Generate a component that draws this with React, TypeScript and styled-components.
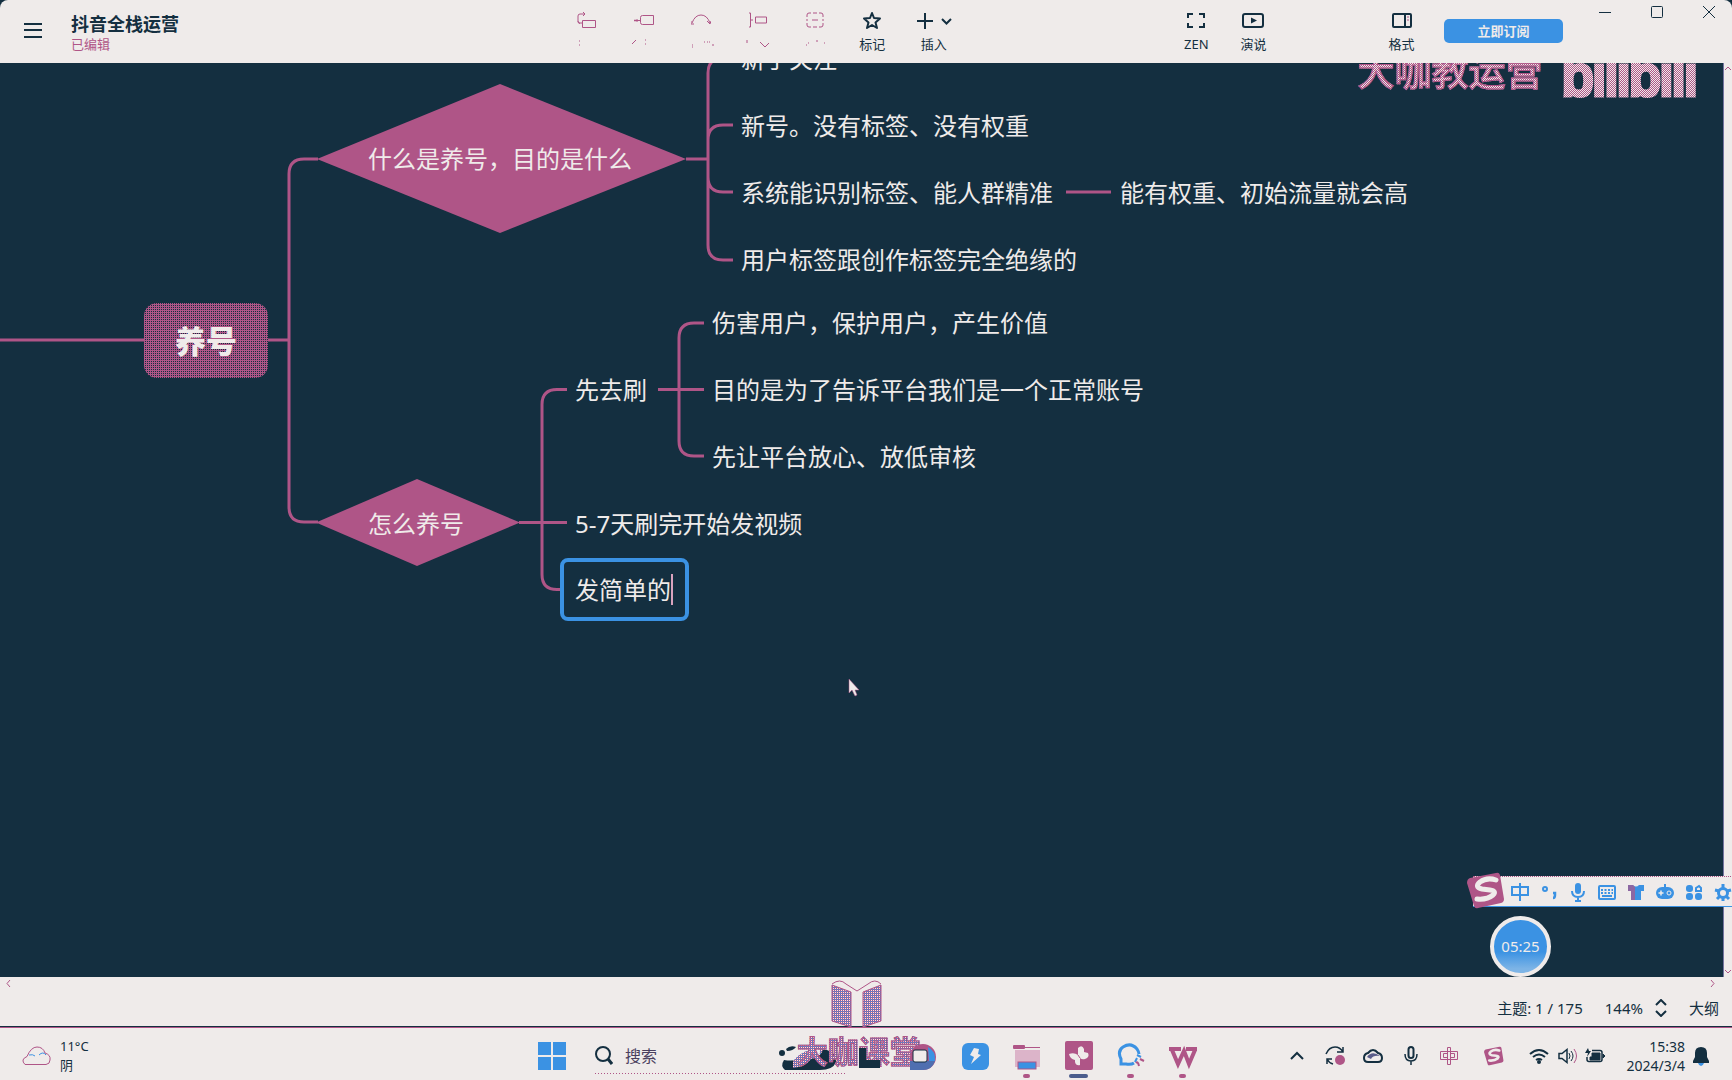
import React from "react";
import styled, { createGlobalStyle } from "styled-components";

const navy = "#142f40";
const pink = "#af5587";
const paper = "#efebea";
const blue = "#3b92e3";

const Global = createGlobalStyle`
  *, *::before, *::after { box-sizing: border-box; }
  body {
    margin: 0;
    background: ${navy};
    color: ${navy};
    font-family: "Noto Sans", "Noto Sans CJK SC", sans-serif;
  }
  button, input {
    font: inherit;
    color: inherit;
    margin: 0;
    padding: 0;
    border: 0;
    background: none;
  }
  svg { display: block; }
`;

const Page = styled.div`
  display: flex;
  flex-direction: column;
  min-height: 100vh;
`;

/* ---------- title bar ---------- */

const Header = styled.header`
  display: flex;
  height: 63px;
  background: ${paper};
  border-radius: 8px 8px 0 0;
`;

const DocInfo = styled.div`
  flex: 534 1 0;
  display: flex;
  align-items: flex-start;
  gap: 29px;
  padding: 12px 0 0 24px;
`;

const MenuButton = styled.button`
  height: 38px;
  display: flex;
  align-items: center;
`;

const DocTitle = styled.h1`
  margin: 0;
  font-size: 18px;
  line-height: 24px;
  font-weight: 700;
`;

const DocState = styled.p`
  margin: 0;
  font-size: 13px;
  line-height: 16px;
  color: ${pink};
`;

const ToolGroup = styled.div`
  display: flex;
`;

const Spacer = styled.div<{ $share: number }>`
  flex: ${(p) => p.$share} 1 0;
`;

const ToolButton = styled.button<{ $wide?: boolean }>`
  width: ${(p) => (p.$wide ? 66 : 57)}px;
  height: 63px;
  padding-top: 10px;
  display: flex;
  flex-direction: column;
  align-items: center;
  gap: 5px;
  font-size: 13px;
  line-height: 18px;
`;

const SubscribeButton = styled.button`
  width: 119px;
  height: 24px;
  margin: 19px 19px 0 14px;
  border-radius: 5px;
  background: ${blue};
  color: ${paper};
  font-size: 13px;
  line-height: 24px;
  font-weight: 700;
`;

const WindowControls = styled.div`
  display: flex;
  gap: 6px;
`;

const WindowButton = styled.button`
  width: 46px;
  height: 24px;
  display: flex;
  align-items: center;
  justify-content: center;
`;

/* ---------- mind map ---------- */

const Workspace = styled.main`
  position: relative;
  flex: 1;
  display: grid;
  grid-template-columns: 1fr 9px;
  min-height: 600px;
  overflow: hidden;
`;

const Canvas = styled.section`
  position: relative;
  overflow: hidden;
  background: ${navy};
  color: ${paper};
`;

const Links = styled.svg`
  position: absolute;
  left: 0;
  top: 0;
`;

const Topic = styled.div<{ $x: number; $y: number }>`
  position: absolute;
  left: ${(p) => p.$x}px;
  top: ${(p) => p.$y - 16}px;
  font-size: 24px;
  line-height: 32px;
  white-space: nowrap;
`;

const RootTopic = styled.div`
  position: absolute;
  left: 144px;
  top: 240px;
  width: 124px;
  height: 75px;
  border-radius: 13px;
  background: conic-gradient(${navy} 25%, ${pink} 0) 0 0 / 2px 2px;
  font-size: 31px;
  line-height: 77px;
  font-weight: 900;
  text-align: center;
`;

const EditingTopic = styled.label`
  position: absolute;
  left: 560px;
  top: 495px;
  width: 129px;
  height: 63px;
  display: flex;
  align-items: center;
  padding-left: 11px;
  border: 4px solid ${blue};
  border-radius: 8px;
  background: ${navy};
`;

const TopicInput = styled.input`
  width: 96px;
  font-size: 24px;
  line-height: 32px;
  outline: none;
`;

const Caret = styled.span`
  width: 2px;
  height: 31px;
  background: #d9a3be;
`;

const Pointer = styled.svg`
  position: absolute;
  left: 848px;
  top: 616px;
`;

const Watermark = styled.div`
  position: absolute;
  right: 26px;
  top: -20px;
  display: flex;
  align-items: flex-start;
  gap: 20px;
`;

const speckle = `
  color: transparent;
  background: conic-gradient(${pink} 25%, ${paper} 0 50%, ${pink} 0 75%, ${paper} 0) 0 0 / 2px 2px;
  background-clip: text;
  -webkit-background-clip: text;
  -webkit-text-stroke: 1px ${pink};
`;

const WatermarkName = styled.span`
  ${speckle}
  padding-top: 4px;
  font-size: 37px;
  line-height: 50px;
  font-weight: 500;
`;

const WatermarkBrand = styled.span`
  ${speckle}
  -webkit-text-stroke: 5px transparent;
  padding-bottom: 8px;
  font-family: "Liberation Sans", Arial, sans-serif;
  font-size: 55px;
  line-height: 66px;
`;

const ScrollTrack = styled.div`
  display: flex;
  flex-direction: column;
  justify-content: space-between;
  align-items: center;
  padding: 2px 0;
  background: ${paper};
  border-left: 1px solid #75749f;
`;

const ImeBar = styled.div`
  position: absolute;
  right: -5px;
  bottom: 70px;
  height: 31px;
  display: flex;
  align-items: center;
  padding-left: 32px;
  background: ${paper};
  border-top: 1px dotted ${pink};
  border-bottom: 1px solid ${blue};
`;

const ImeLogo = styled.svg`
  position: absolute;
  left: -6px;
  top: -5px;
`;

const ImeButton = styled.button`
  width: 29px;
  height: 29px;
  display: flex;
  align-items: center;
  justify-content: center;
`;

const TimerBadge = styled.div`
  position: absolute;
  right: 181px;
  bottom: 0;
  width: 61px;
  height: 61px;
  border: 4px solid ${paper};
  border-radius: 50%;
  background: linear-gradient(${blue} 60%, #7db4e6 92%);
  color: ${paper};
  font-size: 15px;
  line-height: 53px;
  text-align: center;
`;

/* ---------- status bar ---------- */

const StatusBar = styled.footer`
  position: relative;
  height: 51px;
  display: flex;
  flex-direction: column;
  background: ${paper};
  border-bottom: 1px solid ${pink};
  box-shadow: inset 0 -1px 0 ${navy};
`;

const HorizontalTrack = styled.div`
  height: 12px;
  display: flex;
  justify-content: space-between;
  align-items: center;
  padding: 0 17px 0 6px;
`;

const StatusRow = styled.div`
  display: flex;
  justify-content: flex-end;
  align-items: center;
  gap: 22px;
  height: 38px;
  padding-right: 13px;
  font-size: 15px;
  line-height: 20px;
`;

const ZoomControl = styled.button`
  display: flex;
  align-items: center;
  gap: 12px;
`;

const BookMark = styled.svg`
  position: absolute;
  left: 48%;
  top: 3px;
`;

/* ---------- taskbar ---------- */

const Taskbar = styled.nav`
  position: relative;
  height: 52px;
  display: flex;
  align-items: center;
  padding-top: 3px;
  background: ${paper};
`;

const Weather = styled.div`
  flex: 515 1 0;
  display: flex;
  align-items: center;
  gap: 9px;
  padding-left: 22px;
  font-size: 13px;
  line-height: 19px;
`;

const SearchBox = styled.label`
  width: 250px;
  height: 36px;
  margin: 5px 0 0 29px;
  display: flex;
  align-items: center;
  gap: 12px;
  padding-bottom: 4px;
  background: linear-gradient(90deg, ${pink} 50%, transparent 0) 0 33px / 3px 1px repeat-x;
`;

const SearchInput = styled.input`
  width: 142px;
  font-size: 16px;
  line-height: 24px;
  outline: none;
  &::placeholder { color: #4a3f5e; opacity: 1; }
`;

const TaskButton = styled.button<{ $mark?: number }>`
  position: relative;
  width: 52px;
  height: 49px;
  display: flex;
  align-items: center;
  justify-content: center;
  &::after {
    content: "";
    position: absolute;
    bottom: 2px;
    width: ${(p) => p.$mark ?? 0}px;
    height: 4px;
    border-radius: 2px;
    background: ${(p) => ((p.$mark ?? 0) > 10 ? "#4b5c8c" : pink)};
  }
`;

const StartButton = styled.button`
  width: 28px;
`;

const TrayButton = styled.button<{ $w: number }>`
  width: ${(p) => p.$w}px;
  height: 40px;
  display: flex;
  align-items: center;
  justify-content: center;
`;

const Clock = styled.time`
  width: 73px;
  margin-right: 7px;
  font-size: 14px;
  line-height: 19px;
  text-align: right;
`;

const BellButton = styled.button`
  margin-right: 22px;
`;

const CourseMark = styled.div`
  ${speckle}
  position: absolute;
  left: 46%;
  top: 1px;
  font-size: 31px;
  line-height: 44px;
  font-weight: 700;
  background-image: conic-gradient(${pink} 25%, ${blue} 0 50%, ${pink} 0 75%, ${paper} 0);
  pointer-events: none;
`;

/* ---------- drawings ---------- */

type IconProps = { w: number; h: number; color?: string; sw?: number; children: React.ReactNode };
const Icon = ({ w, h, color = navy, sw = 2, children }: IconProps) => (
  <svg width={w} height={h} viewBox={`0 0 ${w} ${h}`} fill="none" stroke={color} strokeWidth={sw} aria-hidden="true">
    {children}
  </svg>
);

const Specks = ({ d }: { d: string }) => (
  <Icon w={26} h={18} color={pink} sw={1}>
    <path d={d} />
  </Icon>
);

const mutedTools = [
  {
    name: "主题",
    icon: <path d="M3 13.500q-2 0-2-2V6q0-2 2-2h5M1 11q0 2 2 2h2M6 2l2 2-2 2M5.500 10.500h13v7h-13z" />,
    specks: "M5 6h1M5 10h1",
  },
  {
    name: "子主题",
    icon: <path d="M0 10.500h7M3 9v3M1 9.500v2M6.500 7.500q0-2 2-2h11v9h-11q-2 0-2-2z" />,
    specks: "M1 9l4-4M14 5h1M14 9h1",
  },
  {
    name: "联系",
    icon: <path d="M1 13Q4 5 10 5t9 8M0 11v3h3M16 11l3 3 1-3" />,
    specks: "M4 10h1M4 12h1M16 7h1M19 7h1M21 7h1M24 10h2",
  },
  {
    name: "概要",
    icon: <path d="M1 3h1.500v14H1M3 10h2M7.500 7h11v6h-11z" />,
    specks: "M2 5v3M15 7l5 5 4-4",
  },
  {
    name: "外框",
    icon: (
      <>
        <path d="M2 7V5q0-2 2-2h2M14 3h2q2 0 2 2v2M18 13v2q0 2-2 2h-2M6 17H4q-2 0-2-2v-2M8 3h4M8 17h4M2 9v2M18 9v2" />
        <path d="M7 10h6" />
      </>
    ),
    specks: "M4 10h1M6 8h1M15 5v2M22 8h1",
  },
];

const SogouLogo = ({ bg, fg }: { bg: string; fg: string }) => (
  <>
    <path d="M3 6 29 1q3-1 4 2l4 24q0 3-3 4L11 36q-3 1-4-2L0 11Q0 7 3 6z" fill={bg} />
    <path
      d="M29 8q-9-3-16 2-6 5 2 7l8 1q7 1 3 5-6 5-16 4"
      fill="none"
      stroke={fg}
      strokeWidth="5"
      strokeLinecap="round"
    />
  </>
);

const topics: { x: number; y: number; text: string }[] = [
  { x: 368, y: 96, text: "什么是养号，目的是什么" },
  { x: 741, y: -4, text: "新手关注" },
  { x: 741, y: 63, text: "新号。没有标签、没有权重" },
  { x: 741, y: 130, text: "系统能识别标签、能人群精准" },
  { x: 1120, y: 130, text: "能有权重、初始流量就会高" },
  { x: 741, y: 197, text: "用户标签跟创作标签完全绝缘的" },
  { x: 368, y: 461, text: "怎么养号" },
  { x: 575, y: 327, text: "先去刷" },
  { x: 712, y: 260, text: "伤害用户，保护用户，产生价值" },
  { x: 712, y: 327, text: "目的是为了告诉平台我们是一个正常账号" },
  { x: 712, y: 394, text: "先让平台放心、放低审核" },
  { x: 575, y: 461, text: "5-7天刷完开始发视频" },
];

const imeTools = [
  { name: "中文", icon: <Icon w={20} h={20} color={blue} sw={2}><path d="M2 5h16v8H2zM10 1v18" /></Icon> },
  {
    name: "标点",
    icon: (
      <Icon w={20} h={20} color={blue}>
        <circle cx="6" cy="7" r="2" />
        <path d="M14 11h2v2q0 3-2 3" strokeWidth="2.500" />
      </Icon>
    ),
  },
  {
    name: "语音",
    icon: (
      <Icon w={20} h={20} color={blue}>
        <rect x="7" y="1" width="6" height="11" rx="3" fill={blue} stroke="none" />
        <path d="M4 9q0 6 6 6t6-6M10 15v4M7 19h6" />
      </Icon>
    ),
  },
  {
    name: "键盘",
    icon: (
      <Icon w={20} h={20} color={blue}>
        <rect x="2" y="4" width="16" height="13" rx="1" />
        <path d="M4 8h12M4 11h12" strokeDasharray="2 1.500" />
        <path d="M5 14h10" />
      </Icon>
    ),
  },
  {
    name: "皮肤",
    icon: (
      <Icon w={20} h={20} color={blue} sw={0}>
        <path d="M2 3h5q3 3 6 0h5v6h-3v9H5V9H2z" fill={blue} />
        <path d="M2 3h5l2 2v13H5V9H2z" fill={pink} opacity=".7" />
      </Icon>
    ),
  },
  {
    name: "游戏",
    icon: (
      <Icon w={20} h={20} color={paper} sw={1}>
        <rect x="1" y="5" width="18" height="12" rx="6" fill={blue} stroke="none" />
        <path d="M10 2v4" stroke={blue} strokeWidth="2" />
        <path d="M3.500 11h5M6 8.500v5" strokeWidth="1.500" />
        <circle cx="14" cy="11" r="2" fill={blue} />
      </Icon>
    ),
  },
  {
    name: "工具",
    icon: (
      <Icon w={20} h={20} color={blue} sw={0}>
        <g fill={blue}>
          <rect x="2" y="3" width="7" height="7" rx="3" />
          <rect x="2" y="11" width="7" height="7" rx="3" />
          <rect x="11" y="11" width="7" height="7" rx="3" />
        </g>
        <path d="M12 9V6l3-2 2 2v3z" stroke={blue} strokeWidth="2" />
      </Icon>
    ),
  },
  {
    name: "设置",
    icon: (
      <Icon w={20} h={20} color={blue} sw={3}>
        <circle cx="10" cy="11" r="4.500" />
        <path d="M10 2v4M10 16v3M2 8l4 1M14 9l4-1M4 17l3-3M13 14l3 3" />
      </Icon>
    ),
  },
];

export default function App() {
  return (
    <Page>
      <Global />
      <Header>
        <DocInfo>
          <MenuButton aria-label="菜单">
            <Icon w={18} h={18}>
              <path d="M0 2h18M0 8h18M0 15h18" />
            </Icon>
          </MenuButton>
          <div>
            <DocTitle>抖音全栈运营</DocTitle>
            <DocState>已编辑</DocState>
          </div>
        </DocInfo>
        <ToolGroup>
          {mutedTools.map((t) => (
            <ToolButton key={t.name} aria-label={t.name}>
              <Icon w={20} h={20} color={pink} sw={1}>{t.icon}</Icon>
              <Specks d={t.specks} />
            </ToolButton>
          ))}
          <ToolButton>
            <Icon w={20} h={20}>
              <path d="m10 3 2 5 6 .5-4.500 4L15 18l-5-3-5 3 1.500-5.500L2 8.500 8 8z" strokeLinejoin="round" />
            </Icon>
            标记
          </ToolButton>
          <ToolButton $wide>
            <Icon w={36} h={20}>
              <path d="M1 11h16M9 3v16M26 9l4.500 4.500L35 9" />
            </Icon>
            插入
          </ToolButton>
        </ToolGroup>
        <Spacer $share={201} />
        <ToolGroup>
          <ToolButton>
            <Icon w={20} h={20}>
              <path d="M2 8V4h5M13 4h5v4M18 13v4h-5M7 17H2v-4" />
            </Icon>
            ZEN
          </ToolButton>
          <ToolButton>
            <Icon w={22} h={20}>
              <rect x="1" y="4" width="20" height="13" rx="2" />
              <path d="M9 7.500v6l6-3z" fill={navy} stroke="none" />
            </Icon>
            演说
          </ToolButton>
        </ToolGroup>
        <Spacer $share={91} />
        <ToolButton>
          <Icon w={20} h={20}>
            <rect x="1" y="4" width="18" height="13" rx="1" />
            <path d="M13 4v13" />
            <path d="M15 7h2M15 10h2" strokeWidth="1" stroke={pink} />
          </Icon>
          格式
        </ToolButton>
        <SubscribeButton>立即订阅</SubscribeButton>
        <WindowControls>
          <WindowButton aria-label="最小化">
            <Icon w={12} h={12} sw={1}><path d="M0 6.500h12" /></Icon>
          </WindowButton>
          <WindowButton aria-label="最大化">
            <Icon w={12} h={12} sw={1}><rect x=".5" y=".5" width="11" height="11" rx="1" /></Icon>
          </WindowButton>
          <WindowButton aria-label="关闭">
            <Icon w={12} h={12} sw={1}><path d="M0 0l12 12M12 0L0 12" /></Icon>
          </WindowButton>
        </WindowControls>
      </Header>

      <Workspace>
        <Canvas>
          <Links width="1720" height="914" fill="none" stroke={pink} strokeWidth="3" aria-hidden="true">
            <path d="M0 277h144M268 277h21M318 96h-14q-15 0-15 15v333q0 15 15 15h14" />
            <path d="M317 96 500 21 686 96 500 170z" fill={pink} stroke="none" />
            <path d="M316 459.500 417 416l103 43.500L417 503z" fill={pink} stroke="none" />
            <path d="M686 96h22M733-5h-10q-15 0-15 15v172q0 15 15 15h10M733 62h-10q-15 0-15 15M708 114q0 15 15 15h10" />
            <path d="M1066 129h45" />
            <path d="M519 459.500h48M567 326.500h-10q-15 0-15 15v170q0 15 15 15h10" />
            <path d="M658 326.500h46M704 260h-10q-15 0-15 15v103q0 15 15 15h10" />
          </Links>
          <RootTopic>养号</RootTopic>
          {topics.map((t) => (
            <Topic key={t.text} $x={t.x} $y={t.y}>{t.text}</Topic>
          ))}
          <EditingTopic>
            <TopicInput aria-label="主题内容" defaultValue="发简单的" />
            <Caret />
          </EditingTopic>
          <Pointer width="12" height="18" aria-hidden="true">
            <path d="M1 0v14l3-3 3 6 2-1-2-5h4z" fill={paper} stroke={pink} strokeWidth=".5" />
          </Pointer>
          <Watermark>
            <WatermarkName>大咖教运营</WatermarkName>
            <WatermarkBrand>bilibili</WatermarkBrand>
          </Watermark>
        </Canvas>
        <ScrollTrack>
          <Icon w={6} h={6} color={pink} sw={1}><path d="M0 5l3-3 3 3" /></Icon>
          <Icon w={6} h={6} color={pink} sw={1}><path d="M0 1l3 3 3-3" /></Icon>
        </ScrollTrack>
        <ImeBar>
          <ImeLogo width="38" height="37" viewBox="0 0 38 37" aria-hidden="true">
            <SogouLogo bg={pink} fg={paper} />
          </ImeLogo>
          {imeTools.map((t) => (
            <ImeButton key={t.name} aria-label={t.name}>{t.icon}</ImeButton>
          ))}
        </ImeBar>
        <TimerBadge>05:25</TimerBadge>
      </Workspace>

      <StatusBar>
        <HorizontalTrack>
          <Icon w={5} h={7} color={pink} sw={1}><path d="M4 0L1 3.500 4 7" /></Icon>
          <Icon w={5} h={7} color={pink} sw={1}><path d="M1 0l3 3.500L1 7" /></Icon>
        </HorizontalTrack>
        <StatusRow>
          <span>主题: 1 / 175</span>
          <ZoomControl>
            144%
            <Icon w={12} h={18}><path d="M1 6l5-5 5 5M1 12l5 5 5-5" /></Icon>
          </ZoomControl>
          <span>大纲</span>
        </StatusRow>
        <BookMark width="51" height="49" aria-hidden="true">
          <defs>
            <pattern id="weave" width="2" height="2" patternUnits="userSpaceOnUse">
              <rect width="2" height="2" fill={pink} />
              <rect width="1" height="1" fill={paper} />
              <rect x="1" y="1" width="1" height="1" fill={blue} />
            </pattern>
          </defs>
          <path d="M1 5l19 7v35L1 41zM50 5l-18 7v35l18-6z" fill="url(#weave)" stroke={pink} />
          <path d="M1 4q8-6 14 0l11 7 11-7q7-6 13 0" fill="none" stroke={pink} />
        </BookMark>
      </StatusBar>

      <Taskbar>
        <CourseMark>大咖课堂</CourseMark>
        <Weather>
          <Icon w={29} h={20} color={pink} sw={1}>
            <path d="M3 18.500q-5-5 2-8Q9 1 15 1t8 6q6 2 5 7 0 4-4 4.500z" />
            <path d="M7 9q4-1 6 1M17 9q4-4 7 0" stroke={blue} />
          </Icon>
          <div>
            <div>11°C</div>
            <div>阴</div>
          </div>
        </Weather>
        <StartButton aria-label="开始">
          <Icon w={28} h={28} sw={0}>
            <path d="M0 0h13v13H0zM15 0h13v13H15zM0 15h13v13H0zM15 15h13v13H15z" fill={blue} />
          </Icon>
        </StartButton>
        <SearchBox>
          <Icon w={18} h={20}>
            <circle cx="8" cy="8" r="7" />
            <path d="M13 13l4 5" strokeWidth="3" />
          </Icon>
          <SearchInput aria-label="搜索" placeholder="搜索" />
          <Icon w={58} h={28} sw={0}>
            <path d="M5 18q14 2 20-4 12-9 23-6 10 3 9 12-3 8-16 8H6q-5-4-1-10z" fill={navy} />
            <path d="M14 19q12-15 30-11-3 8-12 9-6 8-18 9z" fill="url(#weave)" />
            <circle cx="3" cy="11" r="3" fill={navy} />
            <path d="M7 7q4-4 10-2-3 4-9 4z" fill={navy} />
            <circle cx="38" cy="10" r="3" fill={paper} />
          </Icon>
        </SearchBox>
        <TaskButton aria-label="任务视图">
          <Icon w={28} h={28} sw={0}><path d="M2 6h7v12h14v8H2z" fill={navy} /></Icon>
        </TaskButton>
        <TaskButton aria-label="录屏">
          <Icon w={28} h={28} sw={0}>
            <path d="M1 15A13 13 0 1 1 14 28H1z" fill={pink} />
            <path d="M1 19h25q-3 9-12 9H1z" fill="#4f6fb0" />
            <path d="M19 5q8 4 7 14h-6z" fill={blue} />
            <rect x="4" y="8" width="14" height="12" rx="2" fill={paper} stroke={navy} strokeWidth="1" />
          </Icon>
        </TaskButton>
        <TaskButton aria-label="闪电">
          <Icon w={28} h={28} sw={0}>
            <rect x="1" y="1" width="27" height="27" rx="6" fill={blue} />
            <path d="M13 6l5 1-1 5 3 1-10 9 3-7-4-2z" fill={paper} />
          </Icon>
        </TaskButton>
        <TaskButton $mark={7} aria-label="文件">
          <Icon w={28} h={28} sw={0}>
            <rect x="0" y="3" width="12" height="4" rx="1" fill={pink} />
            <path d="M12 5h15v1H12z" fill={pink} />
            <path d="M2 8h25v17H2z" fill="#dcb4c9" />
            <rect x="5" y="20" width="18" height="7" fill={blue} stroke={pink} strokeWidth="1" />
          </Icon>
        </TaskButton>
        <TaskButton $mark={19} aria-label="思维导图">
          <Icon w={28} h={29} sw={0}>
            <rect width="28" height="29" rx="2" fill={pink} />
            <path d="M4 13q5-2 9 1V7q4-4 6 1v3l4 1q2 4-3 6-3 1-5-1v7q-4 1-5-3v-2q-5-1-6-6z" fill={paper} />
            <path d="M13 14l2 3" stroke={pink} strokeWidth="1" />
          </Icon>
        </TaskButton>
        <TaskButton $mark={7} aria-label="聊天">
          <Icon w={28} h={28} color={blue} sw={3}>
            <path d="M17 21q-3 2-8 1H4v-5Q0 9 6 5q8-5 14 2 2 3 2 5" />
            <path d="M20 13l4 2M20 16l-2 4" strokeWidth="2" />
            <path d="M19 21q2-2 3 3M23 17l4 2" stroke={pink} strokeWidth="2" />
          </Icon>
        </TaskButton>
        <TaskButton $mark={7} aria-label="文档">
          <Icon w={28} h={28} color={pink} sw={4}>
            <path d="M0 7h12M17 7h11" />
            <path d="M3 8l6 14 6-13 5 13 6-14" />
          </Icon>
        </TaskButton>
        <Spacer $share={69} />
        <TrayButton $w={38} aria-label="展开">
          <Icon w={14} h={10}><path d="M1 8l6-6 6 6" /></Icon>
        </TrayButton>
        <TrayButton $w={38} aria-label="同步">
          <Icon w={20} h={20}>
            <path d="M1 8q3-7 9-7 5 0 8 5M18 1v5h-6M8 18q-4-1-6-5M2 18v-5h5" strokeWidth="1.500" />
            <circle cx="15" cy="14" r="5" fill={pink} stroke="none" />
          </Icon>
        </TrayButton>
        <TrayButton $w={38} aria-label="云盘">
          <Icon w={20} h={16}>
            <path d="M5 14q-4 0-4-4t4-5q5-6 10 0 4 1 4 5t-4 4z" />
            <path d="M4 9q5-7 13-1-7-1-9 3z" fill="#5a5c8a" stroke="none" />
          </Icon>
        </TrayButton>
        <TrayButton $w={38} aria-label="麦克风">
          <Icon w={14} h={20} sw={1}>
            <rect x="4.500" y="1" width="5" height="11" rx="2.500" strokeWidth="2" />
            <path d="M1 8q0 7 6 7t6-7M7 15v4" strokeWidth="1.500" />
          </Icon>
        </TrayButton>
        <TrayButton $w={38} aria-label="中文输入">
          <Icon w={20} h={20} color={pink} sw={1}>
            <path d="M1.500 5.500h17v8h-17zM4.500 7.500h4v4h-4zM11.500 7.500h4v4h-4zM8.500 1.500h3v17h-3z" />
          </Icon>
        </TrayButton>
        <TrayButton $w={52} aria-label="搜狗输入法">
          <svg width="20" height="20" viewBox="0 0 38 37" aria-hidden="true">
            <SogouLogo bg={pink} fg={paper} />
          </svg>
        </TrayButton>
        <TrayButton $w={38} aria-label="网络">
          <Icon w={20} h={16} sw={2}>
            <path d="M1 6q9-8 18 0M4 9q6-5 12 0M7 12q3-2 6 0" />
            <circle cx="10" cy="14" r="2" fill={navy} stroke="none" />
          </Icon>
        </TrayButton>
        <TrayButton $w={20} aria-label="音量">
          <Icon w={20} h={16} sw={1}>
            <path d="M1 5.500h3l5-4v13l-5-4H1z" strokeWidth="1.500" />
            <path d="M11 5q2 3 0 6M13 3q4 5 0 10" />
            <path d="M16 1q5 7 0 14" stroke={pink} />
          </Icon>
        </TrayButton>
        <TrayButton $w={34} aria-label="电池">
          <Icon w={20} h={16} sw={1}>
            <path d="M7 5h8v7H5V9h2z" fill={navy} />
            <path d="M7 2.500h8q2 0 2 2v7q0 2-2 2H4q-2 0-2-2V9" strokeWidth="1.500" />
            <path d="M18 6l2 2-2 2z" fill={navy} />
            <path d="M3 0L0 5h3L2 9l4-6H4z" fill={navy} stroke="none" />
          </Icon>
        </TrayButton>
        <Clock dateTime="2024-03-04T15:38">
          15:38
          <br />
          2024/3/4
        </Clock>
        <BellButton aria-label="通知">
          <Icon w={18} h={20} sw={0}>
            <path d="M1 15l2-4V7q0-6 6-6t6 6v4l2 4v2H1z" fill={navy} />
            <path d="M6 17h6q-1 3-3 3t-3-3z" fill={blue} />
          </Icon>
        </BellButton>
      </Taskbar>
    </Page>
  );
}
